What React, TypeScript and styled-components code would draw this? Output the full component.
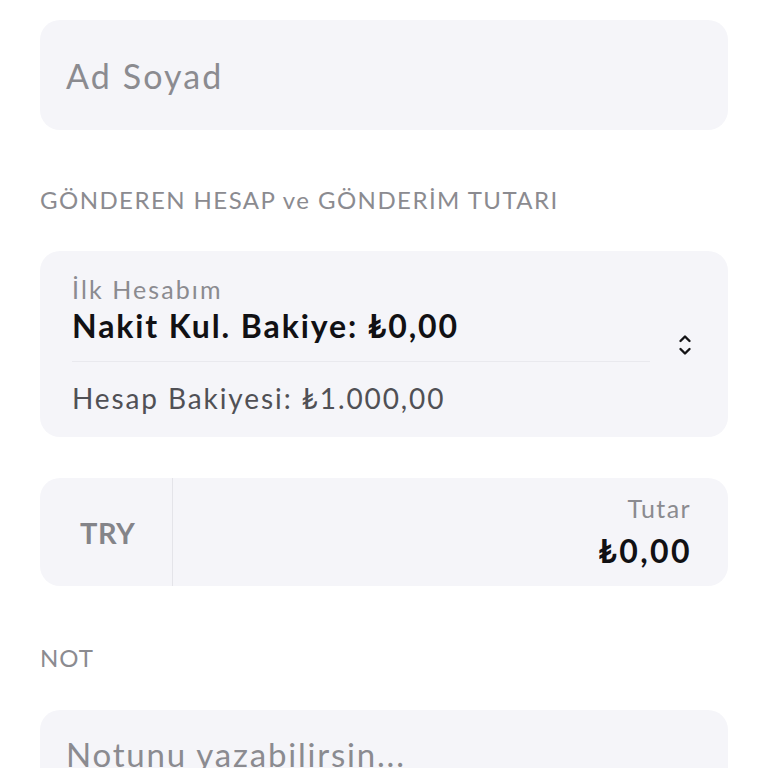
import React from "react";
import styled, { createGlobalStyle } from "styled-components";

const Global = createGlobalStyle`
  html, body { margin: 0; padding: 0; background: #ffffff; }
  body { font-family: Lato, "Noto Sans", "DejaVu Sans", sans-serif; }
`;

const Page = styled.div`
  width: 768px;
  height: 768px;
  overflow: hidden;
  box-sizing: border-box;
  padding: 20px 40px 0 40px;
  display: flex;
  flex-direction: column;
`;

const Card = styled.div<{ $h?: number; $mt?: number }>`
  background: #f5f5f9;
  border-radius: 20px;
  box-sizing: border-box;
  margin-top: ${(p) => p.$mt ?? 0}px;
  ${(p) => (p.$h ? `height: ${p.$h}px;` : "")}
  flex-shrink: 0;
`;

const Placeholder = styled.div`
  height: 100%;
  display: flex;
  align-items: center;
  padding-left: 26px;
  font-size: 34px;
  color: #8b8b90;
  letter-spacing: 2.1px;
  white-space: nowrap;
`;

const SectionLabel = styled.div<{ $mt: number; $ls: number }>`
  margin-top: ${(p) => p.$mt}px;
  font-size: 24px;
  color: #8b8b90;
  line-height: 28px;
  letter-spacing: ${(p) => p.$ls}px;
  white-space: nowrap;
`;

const AccountCard = styled(Card)`
  display: flex;
  flex-direction: row;
  align-items: stretch;
  padding: 24px 32px 0 32px;
`;

const AccountInfo = styled.div`
  flex: 1;
  display: flex;
  flex-direction: column;
`;

const SmallGray = styled.div`
  font-size: 25px;
  line-height: 28px;
  color: #8b8b90;
  letter-spacing: 2.1px;
  white-space: nowrap;
`;

const BigBold = styled.div`
  font-size: 32px;
  line-height: 40px;
  font-weight: 700;
  color: #111114;
  margin-top: 3px;
  letter-spacing: 1.9px;
  white-space: nowrap;
`;

const Divider = styled.div`
  height: 1px;
  background: #e9e9ee;
  margin-top: 15px;
  margin-right: 28px;
`;

const Balance = styled.div`
  font-size: 28px;
  line-height: 36px;
  color: #505055;
  margin-top: 18px;
  letter-spacing: 1.9px;
  white-space: nowrap;
`;

const IconWrap = styled.div`
  display: flex;
  align-items: center;
  padding-bottom: 22px;
  margin-right: 4px;
`;

const AmountCard = styled(Card)`
  display: flex;
  flex-direction: row;
`;

const Currency = styled.div`
  width: 133px;
  border-right: 1.5px solid #e4e4e9;
  display: flex;
  align-items: center;
  padding-left: 40px;
  box-sizing: border-box;
  font-size: 29px;
  font-weight: 700;
  color: #848489;
  letter-spacing: 0.5px;
`;

const AmountBox = styled.div`
  flex: 1;
  display: flex;
  flex-direction: column;
  align-items: flex-end;
  justify-content: center;
  padding-right: 38px;
`;

const AmountLabel = styled.div`
  font-size: 25px;
  line-height: 30px;
  color: #8b8b90;
  letter-spacing: 1.4px;
  margin-right: -1px;
`;

const AmountValue = styled.div`
  font-size: 32px;
  line-height: 40px;
  font-weight: 700;
  color: #111114;
  letter-spacing: 2.4px;
  margin-top: 8px;
  margin-right: -2px;
`;

const NoteCard = styled(Card)`
  padding: 24px 0 0 26px;
  height: 120px;
  font-size: 33px;
  color: #8b8b90;
  letter-spacing: 1.8px;
  white-space: nowrap;
`;

function UpDown() {
  return (
    <svg width="14" height="24" viewBox="0 0 14 24" fill="none">
      <path d="M2.5 8 L7 3.5 L11.5 8" stroke="#141416" strokeWidth="2.4" strokeLinecap="round" strokeLinejoin="round" />
      <path d="M2.5 16 L7 20.5 L11.5 16" stroke="#141416" strokeWidth="2.4" strokeLinecap="round" strokeLinejoin="round" />
    </svg>
  );
}

export default function App() {
  return (
    <>
      <Global />
      <Page>
        <Card $h={110}>
          <Placeholder>Ad Soyad</Placeholder>
        </Card>
        <SectionLabel $mt={56} $ls={1.45}>GÖNDEREN HESAP ve GÖNDERİM TUTARI</SectionLabel>
        <AccountCard $mt={37} $h={186}>
          <AccountInfo>
            <SmallGray>İlk Hesabım</SmallGray>
            <BigBold>Nakit Kul. Bakiye: ₺0,00</BigBold>
            <Divider />
            <Balance>Hesap Bakiyesi: ₺1.000,00</Balance>
          </AccountInfo>
          <IconWrap>
            <UpDown />
          </IconWrap>
        </AccountCard>
        <AmountCard $mt={41} $h={108}>
          <Currency>TRY</Currency>
          <AmountBox>
            <AmountLabel>Tutar</AmountLabel>
            <AmountValue>₺0,00</AmountValue>
          </AmountBox>
        </AmountCard>
        <SectionLabel $mt={58} $ls={1}>NOT</SectionLabel>
        <NoteCard $mt={38}>Notunu yazabilirsin...</NoteCard>
      </Page>
    </>
  );
}
